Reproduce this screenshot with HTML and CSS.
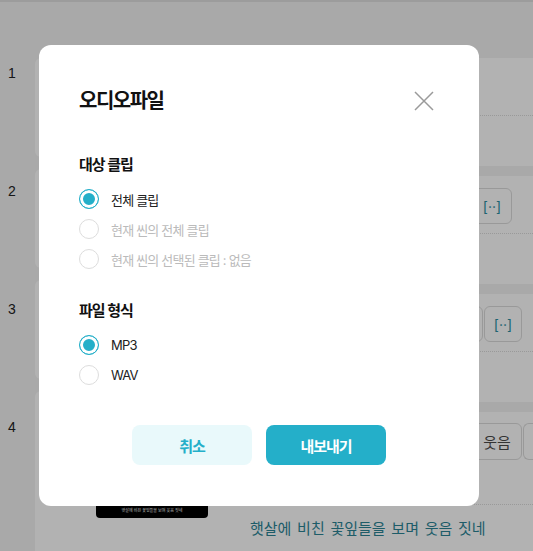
FILE: index.html
```html
<!DOCTYPE html>
<html lang="ko">
  <head>
    <meta charset="UTF-8" />
    <title>오디오파일</title>
    <link rel="stylesheet" href="styles.css">
  </head>
  <body>
    <div class="page">
      <div class="topbar"></div>

      <div class="main">
        <div class="nums">
          <div class="num">1</div>
          <div class="num">2</div>
          <div class="num">3</div>
          <div class="num">4</div>
        </div>

        <div class="thumbs">
          <div class="thumb-card"></div>
          <div class="thumb-card"></div>
          <div class="thumb-card"></div>
          <div class="thumb-card tall">
            <div class="thumb"><span>햇살에 비친 꽃잎들을 보며 웃음 짓네</span></div>
          </div>
        </div>

        <div class="edits">
          <div class="edit-row">
            <div class="chips"></div>
            <div class="dots"></div>
          </div>
          <div class="edit-row">
            <div class="chips pad-21">
              <span class="chip">[··]</span>
            </div>
            <div class="dots"></div>
          </div>
          <div class="edit-row">
            <div class="chips pad-11">
              <span class="chip"></span>
              <span class="chip narrow">[··]</span>
            </div>
            <div class="dots"></div>
          </div>
          <div class="edit-row tall">
            <div class="chips">
              <span class="chip word">웃음</span>
              <span class="chip cut"></span>
            </div>
            <div class="dots far"></div>
            <p class="subtitle">햇살에 비친 꽃잎들을 보며 웃음 짓네</p>
          </div>
        </div>
      </div>
    </div>

    <!-- export dialog -->
    <div class="overlay">
      <div class="modal">
        <div class="modal-head">
          <h2 class="modal-title">오디오파일</h2>
          <button class="close" aria-label="닫기">
            <svg width="20" height="20" viewBox="0 0 20 20">
              <path d="M1 1L19 19M19 1L1 19" stroke="#9a9a9a" stroke-width="1.5" fill="none" />
            </svg>
          </button>
        </div>

        <div class="section">
          <h3 class="section-title">대상 클립</h3>
          <label class="opt"><input type="radio" name="target" checked>전체 클립</label>
          <label class="opt disabled"><input type="radio" name="target" disabled>현재 씬의 전체 클립</label>
          <label class="opt disabled"><input type="radio" name="target" disabled>현재 씬의 선택된 클립 : 없음</label>
        </div>

        <div class="section second">
          <h3 class="section-title">파일 형식</h3>
          <label class="opt"><input type="radio" name="format" checked>MP3</label>
          <label class="opt"><input type="radio" name="format">WAV</label>
        </div>

        <div class="actions">
          <button class="btn cancel">취소</button>
          <button class="btn export">내보내기</button>
        </div>
      </div>
    </div>
  </body>
</html>
```

FILE: styles.css
```css
html,
body {
  margin: 0;
  height: 100%;
  overflow: hidden;
}

body {
  font-family: Inter, "Noto Sans CJK KR", sans-serif;
  background-color: #f3f3f3;
}

.topbar {
  height: 56px;
  border-top: 2px solid #e0e0e0;
}

.main {
  display: flex;
}

/* row numbers */
.nums {
  width: 35px;
  flex: none;
}

.num {
  height: 118px;
  box-sizing: border-box;
  padding: 7px 0 0 8px;
  font-family: "Liberation Sans", Arial, sans-serif;
  font-size: 14px;
  line-height: 16px;
  color: #222;
}

.num:last-child {
  height: 60px;
}

/* thumbnail column */
.thumbs {
  width: 195px;
  flex: none;
}

.thumb-card {
  height: 99px;
  margin-bottom: 12px;
  background-color: #fff;
  border-radius: 6px 0 0 6px;
}

.thumb-card.tall {
  height: 160px;
  margin-bottom: 0;
  padding-top: 64px;
  box-sizing: border-box;
  border-radius: 6px 0 0 0;
}

.thumb {
  width: 112px;
  height: 63px;
  margin-left: 61px;
  background-color: #000;
  border-radius: 4px;
  display: flex;
  align-items: flex-end;
  justify-content: center;
}

.thumb span {
  font-size: 4px;
  line-height: 10px;
  color: #fff;
  margin-bottom: 2px;
}

/* script column */
.edits {
  flex: 1;
}

.edit-row {
  height: 108px;
  margin-bottom: 10px;
  padding-top: 12px;
  box-sizing: border-box;
  background-color: #fff;
}

.edit-row.tall {
  height: 139px;
  margin-bottom: 0;
  padding-top: 11px;
}

.chips {
  display: flex;
  justify-content: flex-end;
  gap: 1px;
  height: 36px;
}

.pad-21 {
  padding-right: 21px;
}

.pad-11 {
  padding-right: 11px;
}

.chip {
  width: 40px;
  box-sizing: border-box;
  border: 1px solid #dcdcdc;
  border-radius: 6px;
  display: flex;
  align-items: center;
  justify-content: center;
  font-size: 14px;
  color: #2a8fa3;
}

.chip.narrow {
  width: 38px;
}

.chip.word {
  width: 50px;
  height: 37px;
  font-size: 15px;
  color: #4a4a4a;
}

/* next chip, cut off by the window edge */
.chip.cut {
  width: 10px;
  height: 37px;
  border-right: none;
  border-radius: 6px 0 0 6px;
}

.dots {
  margin-top: 9px;
  border-top: 1px dotted #dcdcdc;
}

.dots.far {
  margin-top: 45px;
}

.subtitle {
  margin: 12px 0 0 20px;
  font-size: 15px;
  line-height: 24px;
  word-spacing: 1.5px;
  color: #2b8596;
}

/* dialog */
.overlay {
  position: fixed;
  inset: 0;
  background-color: rgba(0, 0, 0, 0.3);
  padding: 45px 0 0 39px;
}

.modal {
  width: 440px;
  box-sizing: border-box;
  padding: 40px 40px 41px;
  background-color: #fff;
  border-radius: 12px;
}

.modal-head {
  display: flex;
  align-items: center;
  justify-content: space-between;
  height: 32px;
}

.modal-title {
  margin: 0;
  font-size: 20px;
  line-height: 32px;
  font-weight: 700;
  letter-spacing: -1.5px;
  color: #111;
}

.close {
  width: 20px;
  height: 20px;
  margin-right: 5px;
  padding: 0;
  border: none;
  background: none;
  cursor: pointer;
}

.close svg {
  display: block;
}

.section {
  margin-top: 37px;
}

.section.second {
  margin-top: 26px;
}

.section-title {
  margin: 0 0 8px;
  font-size: 15px;
  line-height: 22px;
  font-weight: 700;
  letter-spacing: -1px;
  color: #111;
}

.opt {
  display: flex;
  align-items: center;
  gap: 12px;
  height: 30px;
  font-size: 13px;
  letter-spacing: -0.8px;
  color: #222;
}

.opt.disabled {
  color: #bbb;
}

.opt input {
  appearance: none;
  width: 20px;
  height: 20px;
  margin: 0;
  box-sizing: border-box;
  border: 1px solid #ddd;
  border-radius: 50%;
  background-color: #fff;
}

.opt input:checked {
  border: 1.5px solid #24afc9;
  background-color: #24afc9;
  box-shadow: inset 0 0 0 3px #fff;
}

.actions {
  display: flex;
  justify-content: center;
  gap: 14px;
  margin-top: 35px;
}

.btn {
  width: 120px;
  height: 40px;
  border: none;
  border-radius: 8px;
  font-family: inherit;
  font-size: 15px;
  font-weight: 700;
  letter-spacing: -1px;
  cursor: pointer;
}

.btn.cancel {
  background-color: #e9f9fb;
  color: #24afc9;
}

.btn.export {
  background-color: #24afc9;
  color: #fff;
}
```
